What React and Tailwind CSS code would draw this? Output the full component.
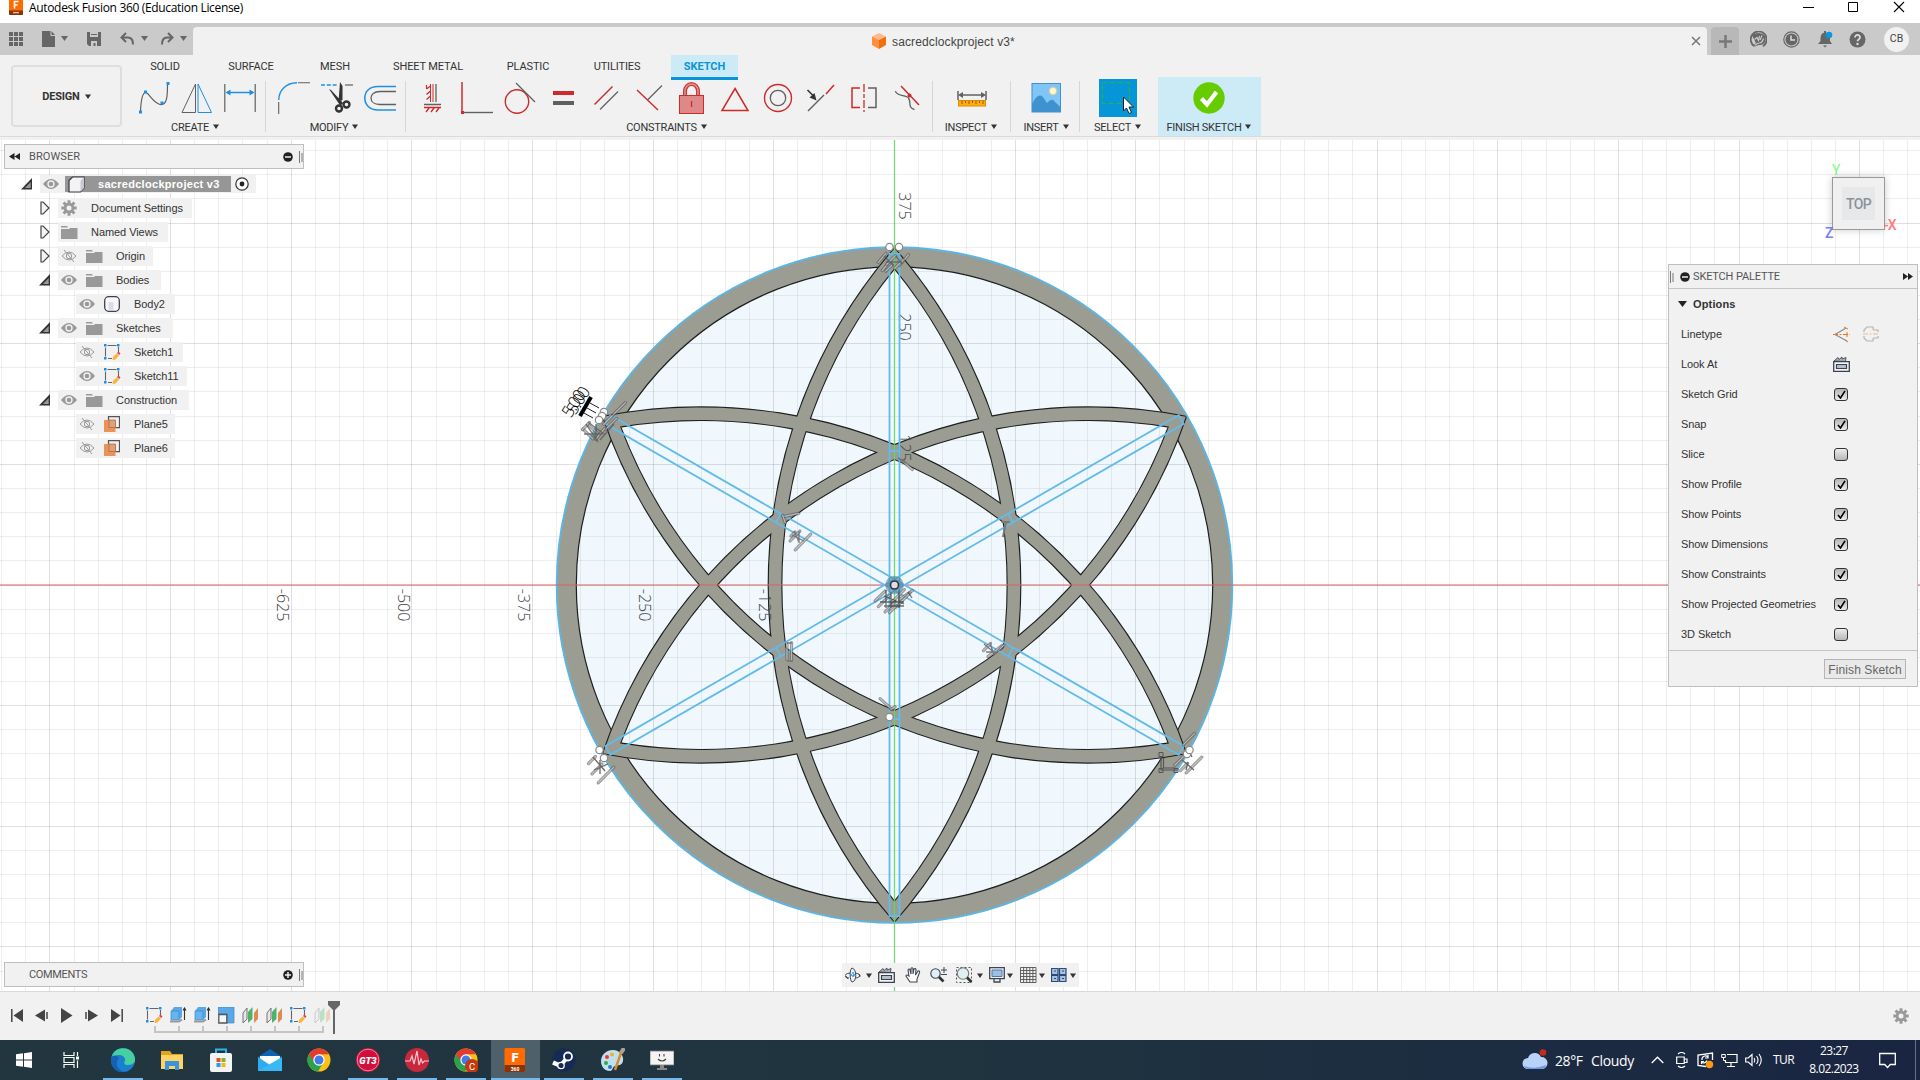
import React from "react";

const UI = "font-['Liberation_Sans',Arial,sans-serif]";
const RB = "font-['Roboto','Liberation_Sans',sans-serif]";
const WIN = "font-['Open_Sans','Noto_Sans',sans-serif]";

function Svg({ w = 32, h = 32, vb, className = "", children }) {
  return (
    <svg width={w} height={h} viewBox={vb || `0 0 ${w} ${h}`} fill="none" className={"shrink-0 " + className}>
      {children}
    </svg>
  );
}

function Caret({ className = "" }) {
  return (
    <Svg w={6} h={5} className={className}>
      <path d="M0 .5h6L3 5z" fill="#333" />
    </Svg>
  );
}

/* ---------- top bars ---------- */

function TitleBar() {
  return (
    <div className="flex h-[23px] items-start justify-between bg-white">
      <div className="flex items-start pl-[9px]">
        <Svg w={14} h={15} vb="0 1 14 15">
          <rect width="14" height="16" rx="1.5" fill="#ff6b00" />
          <path d="M0 11.5h14V15a1 1 0 0 1-1 1H1a1 1 0 0 1-1-1z" fill="#8a3208" />
          <path d="M5.5 9.5v-7h4M5.5 6h3.2" stroke="#fff" strokeWidth="1.6" />
          <path d="M4 13.6h6" stroke="#e8c4b0" strokeWidth="1.4" />
        </Svg>
        <span className={`${WIN} ml-[6px] mt-[-1px] whitespace-nowrap text-[12px] leading-[17px] tracking-[-0.33px] text-black`}>
          Autodesk Fusion 360 (Education License)
        </span>
      </div>
      <div className="flex pr-[15px]">
        <Svg w={11} h={14} className="mr-[34px]"><path d="M0 7.5h11" stroke="#000" /></Svg>
        <Svg w={11} h={14} className="mr-[34px]"><path d="M.5 2.5h9v9h-9z" stroke="#000" /></Svg>
        <Svg w={12} h={14}><path d="M1 2l10 10M11 2L1 12" stroke="#000" strokeWidth="1.1" /></Svg>
      </div>
    </div>
  );
}

function QuickBar() {
  return (
    <div className="flex h-[32px] items-end bg-[#cacaca]">
      <div className="flex h-[32px] w-[193px] shrink-0 items-center pl-[9px]">
        <Svg w={14} h={14}>
          {[0, 5, 10].map((y) => [0, 5, 10].map((x) => <rect key={x + "-" + y} x={x} y={y} width="4" height="4" fill="#666" />))}
        </Svg>
        <Svg w={14} h={16} className="ml-[19px]">
          <path d="M0 0h8.5v5H13v11H0z" fill="#666" /><path d="M9.5 0L13 4H9.5z" fill="#666" />
        </Svg>
        <Svg w={8} h={5} className="ml-[5px] mt-[-2px]"><path d="M0 0h7L3.500 5z" fill="#666" /></Svg>
        <Svg w={14} h={14} className="ml-[18px]">
          <path d="M0 0h14v14H2l-2-2z" fill="#666" /><path d="M3 0h8v5H3z" fill="#cacaca" /><path d="M4 2.500h6M4 8.500h6v6H4z" stroke="#666" /><path d="M4 9h6v5H8.500v-3h-2v3H4z" fill="#cacaca" />
        </Svg>
        <Svg w={15} h={14} className="ml-[19px]">
          <path d="M6 1L1.500 5.500L6 10M2 5.500h6q5 0 5 7" stroke="#666" strokeWidth="2" />
        </Svg>
        <Svg w={8} h={5} className="ml-[6px] mt-[-2px]"><path d="M0 0h7L3.500 5z" fill="#666" /></Svg>
        <Svg w={15} h={14} className="ml-[11px]">
          <path d="M8 1l4.500 4.500L8 10M12 5.500H7q-5 0-5 7" stroke="#666" strokeWidth="2" />
        </Svg>
        <Svg w={8} h={5} className="ml-[5px] mt-[-2px]"><path d="M0 0h7L3.500 5z" fill="#666" /></Svg>
      </div>
      <div className="flex h-[28px] w-[1514px] items-center rounded-t-[4px] bg-[#f1f1f1]">
        <div className="flex flex-1 items-center pl-[679px]">
          <Svg w={14} h={16}>
            <path d="M7 0l7 3.500L7 7L0 3.500z" fill="#ffb98a" /><path d="M0 3.500L7 7v9l-7-4z" fill="#ff8f3c" /><path d="M14 3.500L7 7v9l7-4z" fill="#f07010" />
          </Svg>
          <span className={`${UI} ml-[6px] mt-px whitespace-nowrap text-[12px] tracking-[0.13px] text-[#444]`}>sacredclockproject v3*</span>
        </div>
        <Svg w={10} h={10} className="mr-[6px]"><path d="M1 1l8 8M9 1L1 9" stroke="#777" strokeWidth="1.500" /></Svg>
      </div>
      <div className="ml-[4px] flex h-[28px] w-[28px] items-center justify-center rounded-t-[4px] bg-[#b8b8b8]">
        <Svg w={13} h={13}><path d="M6.500 0v13M0 6.500h13" stroke="#777" strokeWidth="2.500" /></Svg>
      </div>
      <div className="flex h-[32px] items-center">
        <Svg w={17} h={17} className="ml-[11px]">
          <path d="M4.500 15.300A8 8 0 1 1 13 15.200" stroke="#666" strokeWidth="1.800" />
          <path d="M2 4.500C5 1 12 1 15 5c2 5-1 9-5 9-2 0-3 .5-4.500 1.500L4 14c2-1 2-2 1-4z" fill="#666" />
          <path d="M4.500 8.500L7 6.500l1.500 3 1-4.500M12 4.500l-2 4.500M13.500 7.500q-1 4-4 4.500-3 0-4 2.500" stroke="#cacaca" strokeWidth="1.200" />
        </Svg>
        <Svg w={17} h={17} className="ml-[16px]">
          <circle cx="8.500" cy="8.500" r="7.700" stroke="#666" strokeWidth="1.200" /><circle cx="8.500" cy="8.500" r="6" fill="#666" /><path d="M8 4.500V9h4" stroke="#ddd" strokeWidth="1.500" />
        </Svg>
        <Svg w={15} h={17} className="ml-[18px]">
          <path d="M0 13h14l-2-3V7c0-3-2-5-4-5.300V0H6v1.700C4 2 2.500 4 2.500 7v3z" fill="#666" /><path d="M5 14.500h4L7 16.500z" fill="#666" /><circle cx="11" cy="4" r="3.300" fill="#0a96e0" />
        </Svg>
        <Svg w={17} h={17} className="ml-[16px]">
          <circle cx="8.500" cy="8.500" r="8" fill="#666" /><path d="M6 6.500c0-3.500 5.200-3.300 5 0-.1 1.800-2.500 2-2.500 3.800" stroke="#ddd" strokeWidth="1.800" /><circle cx="8.500" cy="13" r="1.200" fill="#ddd" />
        </Svg>
        <div className="ml-[18px] flex h-[25px] w-[25px] items-center justify-center rounded-full bg-[#f1f1f1]">
          <span className={`${RB} text-[10.500px] text-[#444]`}>CB</span>
        </div>
      </div>
    </div>
  );
}

const R = "#cf2a2a", G = "#606060", B = "#1c90e8";

const ICONS = {
  spline: (<>
    <path d="M2.500 29C3 18 4 12 7 10.500S14 20 22 22.500C29 24 29.500 14 29.500 3" stroke={G} strokeWidth="1.200" />
    {[[1, 28.500], [6, 8.500], [22.500, 19.500], [28.500, 0]].map(([x, y]) => <rect key={x} x={x} y={y} width="3" height="3" fill={B} />)}
  </>),
  mirror: (<><path d="M14.500 2v28.500H1z" stroke={G} /><path d="M17 2v28.500h13.500z" stroke={B} /></>),
  dimension: (<><path d="M.8 2v28M31.200 2v28" stroke={G} strokeWidth="1.200" /><path d="M3 10.500h26" stroke={B} strokeWidth="1.500" /><path d="M1.500 10.500l5-3v6zM30.500 10.500l-5-3v6z" fill={B} /></>),
  fillet: (<><path d="M.7 18C1 8 8 1 19 .8" stroke={B} strokeWidth="1.400" /><path d="M20 .8h12M.7 20v12" stroke={G} strokeWidth="1.100" /></>),
  trim: (<>
    <path d="M0 3h16" stroke={B} strokeWidth="1.400" strokeDasharray="4 1.800" /><path d="M24 3h8" stroke={G} strokeWidth="1.200" />
    <path d="M19 0l2.500 4v14L17.500 20zM8 7l2 1 12 13-2.500 3z" fill="#333" /><circle cx="18" cy="26.500" r="3" stroke="#333" strokeWidth="2.400" /><circle cx="25.500" cy="22.500" r="3" stroke="#333" strokeWidth="2.400" />
  </>),
  offset: (<><path d="M32 4.500H14C5 4.500.8 10 .8 16S5 28 14 28h18" stroke={B} strokeWidth="1.500" /><path d="M32 9.500H16c-6 0-9 3-9 6.500s3 6.500 9 6.500h16" stroke={G} strokeWidth="1.300" /></>),
  fix: (<>
    <path d="M15 2v18M12.500 2v18" stroke={R} /><path d="M18 2v18" stroke={G} strokeWidth="1.300" /><path d="M12.500 4l-4 3M12.500 9l-4 3.500M12.500 14l-4 3.500M8.500 3v4" stroke={R} strokeWidth="1.200" />
    <path d="M6 22.500h17" stroke={G} strokeWidth="1.500" /><path d="M6 25.500h17M11 26l-3 4M16 26l-3 4M21 26l-3 4" stroke={R} strokeWidth="1.300" />
  </>),
  perp: (<><path d="M1 0v29" stroke={R} strokeWidth="1.500" /><path d="M3 30.500h29" stroke={G} strokeWidth="1.400" /><rect x="0" y="29" width="3" height="3" fill={R} /></>),
  tangent: (<><circle cx="13" cy="19.500" r="11.700" stroke={R} strokeWidth="1.400" /><path d="M12 1l19 19" stroke={G} strokeWidth="1.300" /></>),
  equal: (<><path d="M6 11h21" stroke={R} strokeWidth="4" /><path d="M6 21h21" stroke={G} strokeWidth="4" /></>),
  parallel: (<><path d="M4.500 22.500l18-18" stroke={R} strokeWidth="1.400" /><path d="M10 27.500L28 9.500" stroke={G} strokeWidth="1.300" /></>),
  horiz: (<><path d="M4 8l21 20" stroke={R} strokeWidth="1.400" /><path d="M14.500 18L29 3.500" stroke={G} strokeWidth="1.300" /></>),
  lock: (<><path d="M9 14V9a6.500 7 0 0 1 13 0v5" stroke="#c93a3a" strokeWidth="4" /><path d="M9 14V9a6.500 7 0 0 1 13 0v5" stroke="#e89090" strokeWidth="1.500" /><rect x="3.500" y="13.500" width="24" height="18" fill="#de8888" stroke={R} /><path d="M15.500 19v6" stroke={R} strokeWidth="1.300" /></>),
  tri: <path d="M16 6.500L29 28.500H3z" stroke={R} strokeWidth="1.500" />,
  conc: (<><circle cx="16" cy="16" r="13.500" stroke={R} strokeWidth="1.400" /><circle cx="16" cy="16" r="7.700" stroke={G} strokeWidth="1.300" /></>),
  colinear: (<><path d="M3 29l16-16" stroke={G} strokeWidth="1.400" /><path d="M21 12l8-9" stroke={R} strokeWidth="1.500" /><path d="M2.500 8l6 6" stroke="#333" strokeWidth="1.600" /><path d="M11.500 18.500l-7-3 5-4.500z" fill="#333" /></>),
  symm: (<><path d="M12 6H4v19.500h8" stroke={R} strokeWidth="1.500" /><path d="M16 2v28" stroke={R} strokeWidth="1.300" strokeDasharray="8 2 4 2" /><path d="M20 6h8v19.500h-8" stroke={G} strokeWidth="1.500" /></>),
  curv: (<><path d="M10 4l18 19" stroke={R} strokeWidth="1.500" /><path d="M4.500 9c0 5 11 4 13 7 3 4-1 10 6 11.500" stroke={G} strokeWidth="1.300" /><circle cx="18.500" cy="13.500" r="2" fill={R} /></>),
};

function Tool({ name }) {
  return <div className="flex w-[43px] justify-center pl-[2px]"><Svg>{ICONS[name]}</Svg></div>;
}

function GroupLabel({ children, className = "" }) {
  return (
    <div className={`flex items-center justify-center gap-[4px] pt-[3px] ${className}`}>
      <span className={`${RB} whitespace-nowrap text-[11px] leading-[14px] tracking-[-0.25px] text-[#333]`}>{children}</span>
      <Caret className="mt-[-3px]" />
    </div>
  );
}

function Sep() {
  return <div className="mt-[1px] h-[51px] w-px bg-[#d6d6d6]" />;
}

function Tab({ w, children }) {
  return <div className={`${RB} ${w} whitespace-nowrap text-center text-[11px] tracking-[-0.12px] text-[#333]`}>{children}</div>;
}

function Group({ names, label, className, labelClass }) {
  return (
    <div className={className}>
      <div className="flex h-[38px] items-start pt-[2px]">{names.map((n) => <Tool key={n} name={n} />)}</div>
      <GroupLabel className={labelClass || ""}>{label}</GroupLabel>
    </div>
  );
}

function Ribbon() {
  return (
    <div className="h-[85px] bg-[#f1f1f1]">
      <div className="flex h-[82px] border-b border-[#dadada]">
        <div className="ml-[11px] mt-[10px] flex h-[62px] w-[111px] shrink-0 items-center justify-center gap-[5px] rounded-[4px] border-2 border-[#dedede]">
          <span className={`${RB} mt-[2px] text-[11px] font-bold tracking-[-0.2px] text-[#333]`}>DESIGN</span><Caret />
        </div>
        <div>
          <div className="flex h-[25px] items-center pl-[10px]">
            <Tab w="w-[66px]">SOLID</Tab><Tab w="w-[106px]">SURFACE</Tab><Tab w="w-[62px]">MESH</Tab><Tab w="w-[124px]">SHEET METAL</Tab><Tab w="w-[76px]">PLASTIC</Tab><Tab w="w-[102px]">UTILITIES</Tab>
            <div className={`${RB} ml-[3px] flex h-[25px] w-[67px] items-center justify-center border-b-[3px] border-[#0696d7] bg-[#cdeaf7] pt-[2px] text-[11px] font-bold text-[#0696d7]`}>SKETCH</div>
          </div>
          <div className="flex h-[56px]">
            <Group className="ml-[9px] w-[134px]" names={["spline", "mirror", "dimension"]} label="CREATE" labelClass="pr-[6px]" />
            <Sep />
            <Group className="ml-[5px] w-[134px]" names={["fillet", "trim", "offset"]} label="MODIFY" labelClass="pr-[8px]" />
            <Sep />
            <Group className="ml-[5px] w-[521px]" names={["fix", "perp", "tangent", "equal", "parallel", "horiz", "lock", "tri", "conc", "colinear", "symm", "curv"]} label="CONSTRAINTS" labelClass="pr-[10px]" />
            <Sep />
            <div className="w-[77px]">
              <div className="flex h-[38px] justify-center pt-[2px]">
                <Svg>
                  <path d="M2 9v9M30 9v9" stroke={G} strokeWidth="1.500" /><path d="M4 13h24" stroke={G} strokeWidth="1.500" /><path d="M2 13l5-3v6zM30 13l-5-3v6z" fill={G} />
                  <rect x="2.500" y="18.500" width="27" height="5.500" fill="#ffab10" stroke="#d98e00" /><path d="M6 19v3M9.500 19v2M13 19v3M16.500 19v2M20 19v3M23.500 19v2M27 19v3" stroke="#855500" strokeWidth=".9" />
                </Svg>
              </div>
              <GroupLabel className="pr-[1px]">INSPECT</GroupLabel>
            </div>
            <Sep />
            <div className="w-[68px]">
              <div className="flex h-[38px] justify-center pl-px pt-[2px]">
                <Svg>
                  <rect x="2" y="1.500" width="28.500" height="28.500" fill="#7fc6f7" stroke="#3f92cf" />
                  <circle cx="23" cy="9" r="3.700" fill="#fdf6cf" stroke="#e8c880" strokeWidth=".8" />
                  <path d="M2 22q6-12 11-7l4 6q5-6 8-1l5.500 5v5H2z" fill="#3f92cf" />
                </Svg>
              </div>
              <GroupLabel className="pl-[2px]">INSERT</GroupLabel>
            </div>
            <Sep />
            <div className="w-[78px]">
              <div className="flex h-[38px] justify-center pr-[2px]">
                <Svg w={38} h={38} className="mt-[-1px]">
                  <rect width="38" height="38" fill="#0696d7" /><path d="M3.500 3.500h27v21h-27z" stroke="#29b34a" strokeWidth="1.200" strokeDasharray="5 3" />
                  <path d="M24.500 18v14l3-3 2.500 5.500 2.500-1-2.500-5.500h4.500z" fill="#fff" stroke="#222" />
                </Svg>
              </div>
              <GroupLabel className="pr-[3px]">SELECT</GroupLabel>
            </div>
            <div className="mt-[-3px] w-[103px] bg-[#cdeaf7] pt-[3px]">
              <div className="flex h-[38px] justify-center pr-px pt-[2px]">
                <Svg><circle cx="16" cy="16" r="15.700" fill="#66cc00" /><path d="M8.500 16.500l5.500 6 9.500-12.500" stroke="#fff" strokeWidth="4.200" /></Svg>
              </div>
              <GroupLabel className="pr-px">FINISH SKETCH</GroupLabel>
            </div>
          </div>
        </div>
      </div>
    </div>
  );
}

/* ---------- model canvas ---------- */

const CX = 894.5, CY = 585, STEP = 24.13;
const cols = Array.from({ length: 81 }, (_, i) => i - 38);
const rows = Array.from({ length: 36 }, (_, i) => i - 18);
const LENS = "M0 -336.400A512.800 512.800 0 0 1 0 336.400A512.800 512.800 0 0 1 0 -336.400Z M0 -316.900A500.200 500.200 0 0 1 0 316.900A500.200 500.200 0 0 1 0 -316.900Z";

function Ruler({ x, y, children }) {
  return (
    <text transform={`translate(${x} ${y}) rotate(90)`} textAnchor="middle" fontFamily="Open Sans" fontWeight="300" fontSize="16" fill="#444">{children}</text>
  );
}

/* slanted bar used by the constraint markers */
function Bar({ x, y, a = -45, l = 16 }) {
  return (
    <g transform={`translate(${x} ${y}) rotate(${a})`}>
      <path d={`M${-l / 2} 0H${l / 2}`} stroke="#555" strokeOpacity=".6" strokeWidth="3.200" strokeLinecap="round" />
      <path d={`M${-l / 2} 0H${l / 2}`} stroke="#ccc" strokeOpacity=".8" strokeWidth="1.200" strokeLinecap="round" />
    </g>
  );
}

function Dot({ x, y }) {
  return <circle cx={x} cy={y} r="3.700" fill="#fff" stroke="#888" strokeWidth="1.200" />;
}

function Model() {
  return (
    <svg width="1920" height="851" viewBox="0 140 1920 851" fill="none" className="absolute inset-0">
      <circle cx={CX} cy={CY} r="337.500" fill="#f0f8fe" />
      <g shapeRendering="crispEdges">
        {cols.map((i) => <path key={i} d={`M${Math.round(CX + i * STEP - 0.5) + 0.5} 140V991`} stroke="#000" strokeOpacity={i % 5 === 0 ? 0.12 : 0.065} />)}
        {rows.map((i) => <path key={i} d={`M0 ${Math.round(CY + i * STEP - 0.5) + 0.5}H1920`} stroke="#000" strokeOpacity={i % 5 === 0 ? 0.12 : 0.065} />)}
      </g>
      <g transform={`translate(${CX} ${CY})`}>
        <circle r="328" stroke="#9b9c92" strokeWidth="19.500" />
        <circle r="318.200" stroke="#1c1f1e" strokeWidth="1.200" />
        <g stroke="#1c1f1e" strokeWidth="2.200">
          <path d={LENS} /><path d={LENS} transform="rotate(60)" /><path d={LENS} transform="rotate(120)" />
        </g>
        <g fill="#9b9c92" fillRule="evenodd">
          <path d={LENS} /><path d={LENS} transform="rotate(60)" /><path d={LENS} transform="rotate(120)" />
        </g>
        <circle r="337.800" stroke="#5cb6e4" strokeWidth="1.900" />
      </g>
      <path d="M0 585H1920" stroke="#e06060" strokeOpacity=".5" strokeWidth="1.800" />
      <path d="M894.500 140V991" stroke="#62dc62" strokeOpacity=".85" strokeWidth="1.300" />
      <Ruler x="276.500" y="605">-625</Ruler><Ruler x="397.500" y="605">-500</Ruler><Ruler x="518" y="605">-375</Ruler><Ruler x="638.500" y="605">-250</Ruler><Ruler x="759" y="605">-125</Ruler>
      <Ruler x="898.500" y="206">375</Ruler><Ruler x="898.500" y="327">250</Ruler><Ruler x="898.500" y="448">125</Ruler>
      <g transform={`translate(${CX} ${CY})`} stroke="#62bbe8" strokeWidth="1.800">
        {[0, 60, 120].map((a) => <path key={a} transform={`rotate(${a})`} d="M-5 -331H5V331H-5ZM-5 -134H5M-5 134H5" />)}
      </g>
      <Bar x="882" y="258" a="-50" l={12} /><Bar x="886" y="266" a="-50" l={12} /><Bar x="889" y="268" a="-45" l={9} /><Bar x="891" y="260" a="-45" l={12} /><Bar x="904" y="260" a="-50" l={14} /><Bar x="899" y="264" a="-45" l={12} /><path d="M884 256l10 10M896 256l6 8M886 262h16" stroke="#555" strokeOpacity=".7" strokeWidth="1.300" />
      <Bar x="619" y="409" a="-45" l={18} /><Bar x="611" y="424" /><Bar x="608" y="420" l={12} /><Bar x="588" y="434" a="45" l={14} /><Bar x="594" y="430" a="45" l={14} /><Bar x="600" y="434" a="-50" l={14} /><Bar x="586" y="426" a="-45" l={10} /><path d="M586 424l12 18M596 424v16M584 434h18M600 440l14-16M588 422l16 12" stroke="#555" strokeOpacity=".75" strokeWidth="1.400" />
      <Bar x="803" y="542" l={22} /><Bar x="795" y="536" l={14} /><Bar x="793" y="534" l={6} /><path d="M794 531l5 11M799 531v12M792 535l12 6" stroke="#777" strokeWidth="1.300" /><Bar x="791" y="515" a="-12" l={16} /><Bar x="784" y="519" a="70" l={8} />
      <Bar x="995" y="651" a="-38" l={18} /><Bar x="987" y="647" l={10} /><Bar x="1002" y="647" a="-45" l={6} /><path d="M984 644l12 10M990 643l4 12M986 652h12" stroke="#777" strokeWidth="1.300" />
      <Bar x="791.500" y="651.500" a="90" l={18} /><Bar x="787" y="651.500" a="90" l={16} /><path d="M787 643h5M787 661h5" stroke="#777" strokeWidth="1.500" />
      <Bar x="907" y="465" a="40" l={14} /><path d="M898 458l8 5" stroke="#777" strokeWidth="2" /><path d="M1001.500 522h8M1006 522l-3 15" stroke="#777" strokeWidth="2" />
      <Bar x="886" y="704" a="42" l={16} /><Bar x="893" y="708" a="-30" l={5} />
      <Bar x="592" y="760" l={10} /><Bar x="597" y="769" l={14} /><Bar x="606" y="775" l={22} /><path d="M593 757l12 14M600 760v14M594 770l14-6" stroke="#666" strokeWidth="1.300" />
      <Bar x="1194" y="765" l={22} /><Bar x="1189" y="739" l={16} /><Bar x="1179" y="761" l={12} /><Bar x="1184" y="767" l={10} /><path d="M1182 760l12 10M1188 762l-2 8M1192 757l-4-8" stroke="#666" strokeWidth="1.300" />
      <path d="M1161 756v14h16M1163.500 758v10h12" stroke="#555" strokeWidth="1.200" /><path d="M1159 752.500h4v4h-4zM1159 768.500h4v4h-4zM1174 768.500h4v4h-4z" stroke="#555" />
      <Bar x="880" y="596" l={14} /><Bar x="884" y="601" l={16} /><Bar x="890" y="607" l={14} /><Bar x="906" y="595" a="-35" l={16} /><Bar x="903" y="600" a="-45" l={20} /><Bar x="893" y="609" l={10} /><Bar x="898" y="596" l={18} /><path d="M886 590v18M891 592v16M899 590v18M880 602h24M884 596l20 8M884 606h20M908 592l4 6" stroke="#333" strokeWidth="1.300" strokeOpacity=".7" />
      <circle cx="894.500" cy="585" r="7" stroke="#4b7c96" strokeOpacity=".55" strokeWidth="4.500" /><circle cx="894.500" cy="585" r="4" fill="#e6dce8" stroke="#333" strokeWidth="1.600" />
      <g transform="translate(575.500 401.500) rotate(-57)">
        <text x="-17" y="5.500" fontFamily="Open Sans" fontSize="17" fontWeight="300" textLength="29" fill="#000">5.00</text>
        <text x="-12" y="7.500" fontFamily="Open Sans" fontSize="17" fontWeight="300" textLength="29" fill="#000">5.00</text>
      </g>
      <path d="M580 416l11-19" stroke="#000" strokeWidth="4" /><path d="M584 413l9 5M587 408l9 5M590 403l9 5" stroke="#222" />
      <Dot x="889.500" y="247" /><Dot x="899" y="247" /><Dot x="604" y="412" /><Dot x="602" y="416" /><Dot x="599" y="420" /><Dot x="599.500" y="750" /><Dot x="604" y="758" /><Dot x="889.500" y="717" /><Dot x="1187" y="754" /><Dot x="1189.500" y="750" />
    </svg>
  );
}

function ViewCube() {
  return (
    <div className={`${RB} absolute left-[1832px] top-[37px] h-[53px] w-[53px]`}>
      <div className="flex h-full w-full items-center justify-center border border-[#999] bg-[#f0f0f0] shadow-[0_0_8px_rgba(0,0,0,0.2)]">
        <div className="flex h-[33px] w-[33px] items-center justify-center bg-[#e6e8ea] pt-px">
          <span className="text-[14px] font-medium leading-[16px] tracking-[-0.7px] text-[#8d9298]">TOP</span>
        </div>
      </div>
      <span className="absolute left-0 top-[-15px] text-[14px] leading-[17px] text-[#7dfa7d]">Y</span>
      <span className="absolute left-[52px] top-[40px] whitespace-nowrap text-[14px] font-medium leading-[17px] tracking-[-1px] text-[#ff7a7a]">-X</span>
      <span className="absolute left-[-7px] top-[48px] text-[14px] font-medium leading-[17px] text-[#7a7aff]">Z</span>
    </div>
  );
}

/* ---------- browser ---------- */

function Eye({ off }) {
  return off ? (
    <Svg w={16} h={14}><path d="M1 7q7-8 14 0q-7 8-14 0z" stroke="#999" /><circle cx="8" cy="7" r="2.700" stroke="#999" /><path d="M3 1l10 12" stroke="#999" /></Svg>
  ) : (
    <Svg w={16} h={14}><path d="M0 7q8-10 16 0q-8 10-16 0z" fill="#999" /><circle cx="8" cy="7" r="3" fill="#999" stroke="#f1f1f1" strokeWidth="1.400" /></Svg>
  );
}

function Gear({ s = 16 }) {
  return (
    <Svg w={s} h={s} vb="0 0 16 16">
      <g stroke="#999" strokeWidth="3">{[0, 45, 90, 135].map((a) => <path key={a} d="M8 .3v15.400" transform={`rotate(${a} 8 8)`} />)}</g>
      <circle cx="8" cy="8" r="5.300" fill="#999" /><circle cx="8" cy="8" r="2.500" fill="#f1f1f1" />
    </Svg>
  );
}

function SketchIcon() {
  return (
    <Svg w={17} h={17}>
      <path d="M3.500 1.500h9M1.500 3.500v9M14.500 3v6M4 14.500h4" stroke="#666" strokeWidth="1.100" />
      {[[0, 0], [13, 0], [0, 13]].map(([x, y]) => <rect key={x + "" + y} x={x} y={y} width="2.500" height="2.500" fill={B} />)}
      <path d="M9 13l3.500-3.500 2.500 2L11.500 15.500 8.500 16z" fill="#f6b73c" /><path d="M13 9l1.500-1.500 2 2L15.200 11z" fill="#ee3e4e" />
    </Svg>
  );
}

const NODE_ICONS = {
  comp: <Svg w={17} h={17}><path d="M1 4.500L4.500 1H16v11l-3.500 4H1z" fill="#f3f3f5" stroke="#3a3a44" strokeWidth="1.200" /><path d="M12.500 5L16 1v11l-3.500 4z" fill="#c6c8d2" /></Svg>,
  gear: <Gear />,
  folder: <Svg w={17} h={13}><path d="M0 0h6l1 1.500H0zM0 3h8l1-1h7.500v11H0z" fill="#999" /></Svg>,
  body: <Svg w={16} h={16}><rect x=".7" y=".7" width="14.600" height="14.600" rx="4" fill="#fafafc" stroke="#3a4050" strokeWidth="1.300" /><path d="M4.500 6v8h5V6z" fill="#dadde6" /></Svg>,
  sketch: <SketchIcon />,
  plane: <Svg w={16} h={16}><path d="M4.500 .7h11v11h-11z" stroke="#555" strokeWidth="1.200" /><path d="M0 4h11.500v12H0z" fill="#e8935a" /><path d="M5 4h6.500v7.500H5z" fill="#dba27e" stroke="#b9683a" strokeWidth=".8" /></Svg>,
};

function Twist({ open }) {
  return open ? (
    <Svg w={12} h={12} className="ml-[-0.500px]"><path d="M11 0v11.500H0z" fill="#333" /><path d="M9.700 4v6H4z" fill="#999" /></Svg>
  ) : (
    <Svg w={11} h={14}><path d="M2 1h2l6 6-6 6H2z" fill="#f4f4f4" stroke="#444" strokeWidth="1.200" /></Svg>
  );
}

const TREE = [
  { pad: "pl-[58px]", w: "w-[134px]", icon: "gear", label: "Document Settings", tw: "c" },
  { pad: "pl-[58px]", w: "w-[110px]", icon: "folder", label: "Named Views", tw: "c" },
  { pad: "pl-[58px]", w: "w-[95px]", eye: "off", icon: "folder", label: "Origin", tw: "c" },
  { pad: "pl-[58px]", w: "w-[103px]", eye: "on", icon: "folder", label: "Bodies", tw: "o" },
  { pad: "pl-[76px]", w: "w-[99px]", eye: "on", icon: "body", label: "Body2" },
  { pad: "pl-[58px]", w: "w-[115px]", eye: "on", icon: "folder", label: "Sketches", tw: "o" },
  { pad: "pl-[76px]", w: "w-[107px]", eye: "off", icon: "sketch", label: "Sketch1" },
  { pad: "pl-[76px]", w: "w-[111px]", eye: "on", icon: "sketch", label: "Sketch11" },
  { pad: "pl-[58px]", w: "w-[131px]", eye: "on", icon: "folder", label: "Construction", tw: "o" },
  { pad: "pl-[76px]", w: "w-[99px]", eye: "off", icon: "plane", label: "Plane5" },
  { pad: "pl-[76px]", w: "w-[99px]", eye: "off", icon: "plane", label: "Plane6" },
];

function Knob({ plus }) {
  return <Svg w={10} h={10}><circle cx="5" cy="5" r="4.800" fill="#222" /><path d={plus ? "M2 5h6M5 2v6" : "M2 5h6"} stroke="#f1f1f1" strokeWidth="1.500" /></Svg>;
}
function Grip() {
  return <Svg w={4} h={12}><path d="M.5 0v12" stroke="#777" /><path d="M3 2v9" stroke="#777" /></Svg>;
}

function Browser() {
  return (
    <div className={`${UI} absolute left-[4px] top-[4px] w-[300px] text-[11px] text-[#333]`}>
      <div className="flex h-[25px] items-center border border-[#bfbfbf] bg-[#f1f1f1]">
        <Svg w={11} h={7} className="ml-[4px]"><path d="M5.500 0v7L0 3.500zM11 0v7L5.500 3.500z" fill="#222" /></Svg>
        <span className={`${RB} ml-[9px] flex-1 pt-[2px] text-[11px] tracking-[0.080px] text-[#555]`}>BROWSER</span>
        <Knob /><span className="w-[6px]" /><Grip />
      </div>
      <div className="flex h-[27px] items-center pt-[3px]">
        <div className="ml-[17px] w-[19px]"><Twist open /></div>
        <div className="flex h-[18px] w-[216px] items-center bg-[#f1f1f1] pl-[3px]">
          <Eye />
          <div className="ml-[6px] flex h-[16px] w-[166px] items-center bg-[#969696] pl-[3px]">
            {NODE_ICONS.comp}
            <span className="ml-[13px] whitespace-nowrap text-[11px] font-bold tracking-[0.290px] text-white">sacredclockproject v3</span>
          </div>
          <Svg w={14} h={14} className="ml-[4px]"><circle cx="7" cy="7" r="6.200" fill="#fff" stroke="#333" strokeWidth="1.200" /><circle cx="7" cy="7" r="2.400" fill="#222" /></Svg>
        </div>
      </div>
      <div className="ml-[-4px]">
        {TREE.map((n) => (
          <div key={n.label} className={`flex h-[24px] items-center ${n.pad}`}>
            <div className="ml-[-20px] flex w-[20px] items-center pl-[1px]">{n.tw && <Twist open={n.tw === "o"} />}</div>
            <div className={`flex h-[20px] items-center bg-[#f1f1f1] pl-[3px] ${n.w}`}>
              {n.eye && <div className="w-[25px] shrink-0"><Eye off={n.eye === "off"} /></div>}
              <div className="flex w-[30px] shrink-0 items-center">{NODE_ICONS[n.icon]}</div>
              <span className="whitespace-nowrap tracking-[-0.060px]">{n.label}</span>
            </div>
          </div>
        ))}
      </div>
    </div>
  );
}

/* ---------- palette ---------- */

function Check({ on }) {
  return (
    <div className={`flex h-[13px] w-[14px] items-center justify-center rounded-[3px] border border-[#333] bg-gradient-to-b ${on ? "from-[#b4b4b4] to-[#ececec]" : "from-[#ececec] to-[#b8b8b8]"}`}>
      {on ? <Svg w={9} h={9}><path d="M1 5l2.500 3L8 .8" stroke="#000" strokeWidth="1.600" /></Svg> : null}
    </div>
  );
}

const OPTIONS = [["Sketch Grid", true], ["Snap", true], ["Slice", false], ["Show Profile", true], ["Show Points", true], ["Show Dimensions", true], ["Show Constraints", true], ["Show Projected Geometries", true], ["3D Sketch", false]];

function LookAt() {
  return (
    <Svg w={17} h={16}>
      <path d="M1 5l4-3.500 1 2 3-2.500 0 2 4-1.500-.5 4z" fill="#aab0b8" stroke="#444c58" strokeWidth=".9" />
      <path d="M.7 5.700h15.600v9.600H.7z" fill="#f6f6f6" stroke="#3a4250" strokeWidth="1.300" /><path d="M3.500 8.500h10v4h-10z" fill="#b7c0ca" stroke="#3a4250" strokeWidth="1.200" />
    </Svg>
  );
}

function Row({ label, children }) {
  return (
    <div className="flex h-[30px] items-center pl-[12px]">
      <span className="w-[152px] shrink-0 whitespace-nowrap tracking-[-0.080px]">{label}</span>{children}
    </div>
  );
}

function Palette() {
  return (
    <div className={`${UI} absolute left-[1668px] top-[124px] h-[423px] w-[250px] border border-[#bfbfbf] bg-[#f1f1f1] text-[11px] text-[#333]`}>
      <div className="flex h-[24px] items-center border-b border-[#c4c4c4] pl-[1px] pr-[4px]">
        <Grip /><span className="w-[6px]" /><Knob />
        <span className={`${RB} ml-[3px] flex-1 pt-[2px] text-[11px] tracking-[-0.150px] text-[#555]`}>SKETCH PALETTE</span>
        <Svg w={10} h={7}><path d="M0 0v7l5-3.500zM5 0v7l5-3.500z" fill="#222" /></Svg>
      </div>
      <div className="flex h-[30px] items-center pl-[9px]">
        <Svg w={9} h={6}><path d="M0 0h9L4.500 6z" fill="#222" /></Svg>
        <span className="ml-[6px] font-bold tracking-[0.150px]">Options</span>
      </div>
      <Row label="Linetype">
        <Svg w={17} h={17}><path d="M13 2L2 8.500L14 15" stroke="#888" strokeWidth="1.100" /><path d="M0 8.500h17" stroke="#e87722" strokeWidth="1.200" strokeDasharray="5 1.500 2 1.500" /><path d="M11 1l4 2M12 14l3 2M14 6v5" stroke="#e87722" /></Svg>
        <Svg w={16} h={16} className="ml-[13px]"><path d="M1 6V4l3-3h6v2l1 1h4v2M1 10v2l3 3h6v-2l1-1h4v-2" stroke="#b5b5b5" strokeWidth="1.200" /><path d="M0 8h16" stroke="#f2b995" strokeWidth="1.200" strokeDasharray="5 1.500 2 1.500" /></Svg>
      </Row>
      <Row label="Look At"><LookAt /></Row>
      {OPTIONS.map(([l, on]) => <Row key={l} label={l}><span className="w-px" /><Check on={on} /></Row>)}
      <div className="mt-[1px] flex h-[36px] items-center justify-end border-t border-[#c4c4c4] pr-[11px]">
        <div className="flex h-[20px] w-[82px] items-center justify-center border border-[#b5b5b5] bg-[#e9e9e9] pt-[2px] text-[12px] text-[#666]">
          <span className="whitespace-nowrap tracking-[0.100px]">Finish Sketch</span>
        </div>
      </div>
    </div>
  );
}

/* ---------- bottom of canvas ---------- */

function NavBar() {
  const c = "#3f4652";
  return (
    <div className="absolute left-[842px] top-[823px] flex h-[24px] w-[237px] items-center bg-[#f1f1f1] pl-[3px]">
      <Svg w={16} h={16}><path d="M7 1C4 3 5 14 7 15c5 0 5-13 0-14z" stroke={c} /><path d="M5 6C-2 7-1 11 4 11M10 6c7 1 6 4 1 5M1 9l2 3M14 7l1 3" stroke={c} /><path d="M5 8h6M8 5v6" stroke={B} strokeDasharray="2 1" strokeWidth="1.300" /></Svg>
      <Caret className="ml-[5px] mr-[6px]" />
      <LookAt />
      <Svg w={16} h={16} className="ml-[10px]"><path d="M5 15L1 9q0-2 3 0L3 3q1-2 2 0l1 4V1.500q1-1.500 2 0V7l1-5q1.500-1 2 .5L10.500 8 13 4q2-.5 1.500 1.500L12 12v3z" fill="#fff" stroke={c} strokeWidth="1.100" /></Svg>
      <Svg w={17} h={16} className="ml-[9px]"><circle cx="5.500" cy="6.500" r="4.700" fill="#dff0f4" stroke={c} strokeWidth="1.100" /><path d="M9 10l4.500 4.500" stroke="#333" strokeWidth="2.600" /><path d="M11 3h6M14 0v6M11 7.500h6" stroke={c} /></Svg>
      <Svg w={17} h={16} className="ml-[9px]"><path d="M.5.500h15v15H.5z" stroke="#555" strokeDasharray="2 2" /><circle cx="7" cy="6.500" r="5.700" fill="#dfeff4" stroke="#777" strokeWidth="1.100" /><path d="M11 10.500l4.500 4.500" stroke="#333" strokeWidth="2.600" /></Svg>
      <Caret className="ml-[4px] mr-[6px]" />
      <Svg w={16} h={16}><path d="M.7.700h14.600v11H.7z" fill="#eee" stroke={c} strokeWidth="1.300" /><path d="M3 3h10v6.500H3z" fill="#9dbfe4" stroke="#5078a8" /><path d="M5 12v3h6v-3" stroke={c} strokeWidth="1.300" /></Svg>
      <Caret className="ml-[2px] mr-[7px]" />
      <Svg w={17} h={16}><path d="M.5.500h15.500v15H.5zM3.600 0v16M6.700 0v16M9.800 0v16M12.900 0v16M0 3.500h16M0 6.500h16M0 9.500h16M0 12.500h16" stroke="#555" strokeWidth=".9" /></Svg>
      <Caret className="ml-[2px] mr-[6px]" />
      <Svg w={16} h={14}><path d="M.5.500h6.500v6H.5zM8.500.500H15v6H8.500zM.5 7.500h6.500v6H.5zM8.500 7.500H15v6H8.500z" fill="#a9c2e2" stroke="#2c4a78" strokeWidth="1.200" /><path d="M3 3h2M11 3h2M3 10.500h2M11 10.500h2" stroke="#2c4a78" /></Svg>
      <Caret className="ml-[3px]" />
    </div>
  );
}

function Comments() {
  return (
    <div className="absolute left-[4px] top-[822px] flex h-[25px] w-[300px] items-center border border-[#bfbfbf] bg-[#f1f1f1]">
      <span className={`${RB} ml-[24px] flex-1 pt-[2px] text-[11px] tracking-[-0.350px] text-[#555]`}>COMMENTS</span>
      <Knob plus /><span className="w-[6px]" /><Grip />
    </div>
  );
}

/* ---------- timeline ---------- */

const extrude = <Svg w={17} h={17}><path d="M1 4l3-4h8v10l-3 3H1z" fill="#5aa9e6" /><path d="M1 4h8v9H1z" fill="#69b4ec" stroke="#3a88c8" strokeWidth=".7" /><path d="M0 14.500h9l3-2" stroke="#999" strokeWidth="2" /><path d="M14.500 2v11M13 3.500L14.500 1 16 3.500" stroke="#333" strokeWidth="1.100" /></Svg>;
const scale = <Svg w={17} h={17}><path d="M0 0h16v16H9V7H0z" fill="#5aa9e6" stroke="#3a88c8" strokeWidth=".7" /><path d="M.8 7.500h8v8.500h-8z" fill="#f6f6f6" stroke="#555" strokeWidth="1.300" /></Svg>;
const midplane = <Svg w={17} h={17}><path d="M1 16V6l4-5v11z" fill="#e8e8e8" stroke="#666" strokeWidth=".9" /><path d="M6 16V5l4.500-5v12z" fill="#4db36c" /><path d="M12 16V6l4-5v11z" fill="#e08a52" /></Svg>;

function Timeline() {
  const d = "#444";
  const steps = [<SketchIcon />, extrude, extrude, scale, midplane, midplane, <SketchIcon />, midplane];
  return (
    <div className="flex h-[49px] items-start border-t border-[#dadada] bg-[#f1f1f1] pt-[15px]">
      <div className="flex w-[142px] shrink-0 items-center pl-[11px] pt-[1px]">
        <Svg w={12} h={15}><path d="M.8 1v13" stroke={d} strokeWidth="1.500" /><path d="M12 1v13L2.500 7.500z" fill={d} /></Svg>
        <Svg w={13} h={15} className="ml-[12px]"><path d="M10 1.500v12L0 7.500z" fill={d} /><path d="M12 4v7" stroke={d} strokeWidth="1.500" /></Svg>
        <Svg w={12} h={15} className="ml-[13px]"><path d="M0 0v15l11.500-7.500z" fill={d} /></Svg>
        <Svg w={13} h={15} className="ml-[12px]"><path d="M3 1.500v12l10-6z" fill={d} /><path d="M1 4v7" stroke={d} strokeWidth="1.500" /></Svg>
        <Svg w={12} h={15} className="ml-[13px]"><path d="M11.200 1v13" stroke={d} strokeWidth="1.500" /><path d="M0 1v13l9.500-6.500z" fill={d} /></Svg>
      </div>
      <div className="flex">
        {steps.map((s, i) => (
          <div key={i} className="flex w-[24px] flex-col items-center">
            <div className={i === 7 ? "pl-px opacity-30" : "pl-px"}>{s}</div>
            <Svg w={25} h={8} className="mt-[2px]"><path d={i === 0 ? "M13 0v6h12" : i === 7 ? "M0 6h13V0" : "M0 6h25M13 6V0"} stroke="#c4c4c4" strokeWidth="2" /></Svg>
          </div>
        ))}
      </div>
      <Svg w={12} h={34} className="ml-[-6px] mt-[-6px]"><path d="M0 0h12v4L7 9H5L0 4z" fill="#666" /><path d="M6 8v25" stroke="#666" strokeWidth="2" /></Svg>
      <div className="ml-auto mr-[11px] mt-[1px]"><Gear /></div>
    </div>
  );
}

/* ---------- taskbar ---------- */

function Chrome() {
  return (
    <g>
      <circle cx="12" cy="12" r="11.500" fill="#fbc116" /><path d="M12 12L2 6.200A11.500 11.500 0 0 0 11 23.500L16.500 14z" fill="#2ba24c" />
      <path d="M12 6.300h10A11.500 11.500 0 0 0 2 6.200L7 14z" fill="#e33b2e" /><circle cx="12" cy="12" r="5.700" fill="#fff" /><circle cx="12" cy="12" r="4.500" fill="#3f7de8" />
    </g>
  );
}

const TASKS = [
  { on: 1, i: <><circle cx="12" cy="12" r="12" fill="#1b7fd0" /><path d="M1 8C4-2 21-3 24 10c1 5-3 7-7 7-3 0-5-2-3-4 1-3-2-6-6-6-3 0-6 1-7 1z" fill="#46cfa0" /><path d="M8 10c-5 5-1 13 6 14C5 26-1 18 0 11c1-4 6-4 8-1z" fill="#1560b0" /></> },
  { i: <><path d="M1 3h9l2 3h11v15H1z" fill="#e5a21a" /><path d="M1 7h22v14H1z" fill="#fdd267" /><path d="M5 13h14v9h-4v-4H9v4H5z" fill="#3a94dc" /></> },
  { i: <><path d="M7 6V1.500h10V6" stroke="#2eb4e8" strokeWidth="2" /><rect x="1" y="5" width="22" height="19" rx="2" fill="#f3f3f3" /><path d="M7.500 10h4v4h-4z" fill="#ee4b2b" /><path d="M12.500 10h4v4h-4z" fill="#7db828" /><path d="M7.500 15h4v4h-4z" fill="#21a0ea" /><path d="M12.500 15h4v4h-4z" fill="#fcb614" /></> },
  { i: <><path d="M0 9l12-8 12 8v14H0z" fill="#0d63b5" /><path d="M2 8h20v6l-10 6L2 14z" fill="#fff" /><path d="M0 9l12 8v6H0z" fill="#30aaf0" /><path d="M24 9L0 23h24z" fill="#38b8f6" /></> },
  { i: <Chrome /> },
  { on: 1, i: <><circle cx="12" cy="12" r="12" fill="#d0103c" /><circle cx="12" cy="12" r="10.800" stroke="#f0a0b0" strokeWidth=".8" /><text x="12" y="15.500" textAnchor="middle" fontFamily="Roboto" fontStyle="italic" fontWeight="900" fontSize="9.500" fill="#fff">GT3</text></> },
  { on: 1, i: <><circle cx="12" cy="12" r="12" fill="#c8283e" /><path d="M0 13h5l2-5 2 8 3-13 2 14 2-6 1.500 4 2-2H24" stroke="#f5c5cc" strokeWidth="1.200" /></> },
  { on: 1, i: <><Chrome /><circle cx="18" cy="18" r="7" fill="#c5380c" /><text x="18" y="21.500" textAnchor="middle" fontFamily="Roboto" fontSize="9.500" fill="#fff">C</text></> },
  { on: 1, act: 1, i: <><rect x="1.500" width="20.500" height="24" rx="1.500" fill="#ff6b00" /><path d="M1.500 17H22v5.500a1.500 1.500 0 0 1-1.500 1.500H3a1.500 1.500 0 0 1-1.500-1.500z" fill="#8a3208" /><text x="12" y="14" textAnchor="middle" fontFamily="Roboto" fontWeight="900" fontSize="13" fill="#fff">F</text><text x="12" y="22.500" textAnchor="middle" fontFamily="Roboto" fontWeight="700" fontSize="5" fill="#fff">360</text></> },
  { on: 1, i: <><circle cx="12" cy="12" r="11.500" fill="#152a55" /><path d="M1 14.500l8 3.500" stroke="#fff" strokeWidth="4.500" /><path d="M9 17l5-6" stroke="#fff" strokeWidth="4" /><circle cx="9" cy="17.500" r="3.200" fill="#152a55" stroke="#fff" strokeWidth="1.300" /><circle cx="16" cy="8.500" r="4" fill="#152a55" stroke="#fff" strokeWidth="1.800" /></> },
  { on: 1, i: <><path d="M12 2C4 2 0 8 0 13c0 7 5 10 9 10 3 0 2-4 5-5s7 0 8-5S19 2 12 2z" fill="#bfe0f0" /><circle cx="6" cy="9" r="2" fill="#e33" /><circle cx="11" cy="6.500" r="2" fill="#efb320" /><circle cx="5" cy="15" r="2" fill="#3a3" /><circle cx="9" cy="19" r="2" fill="#27c" /><path d="M21 2L14 22" stroke="#dd8a2c" strokeWidth="2.500" /><path d="M20 5l3-5" stroke="#b0a090" strokeWidth="4" /></> },
  { on: 1, i: <><path d="M0 3h24v14H0z" fill="#f4f4f4" stroke="#777" strokeWidth=".8" /><path d="M9.500 6v2.500M14 6v2.500M8 11q4 4 8 0" stroke="#444" strokeWidth="1.100" /><path d="M10 17h4v3h3v2H7v-2h3z" fill="#888" /></> },
];

function Taskbar() {
  const w = "#fff";
  return (
    <div className={`${WIN} flex h-[40px] bg-gradient-to-r from-[#21363f] via-[#1f343f] via-50% to-[#1a2542] text-white`}>
      <div className="flex w-[48px] items-center justify-center"><Svg w={16} h={16}><path d="M0 2.300l7-1v6.200H0zM8 1.200L16 0v7.500H8zM0 8.500h7v6.300l-7-1zM8 8.500h8V16l-8-1.200z" fill={w} /></Svg></div>
      <div className="mr-[4px] flex w-[47px] items-center justify-center"><Svg w={17} h={16}><path d="M1 0v3.500h10V0M1 16v-3.500h10V16M1 5.500h10v5H1zM14.500 0v4M14.500 8.500V16" stroke={w} strokeWidth="1.200" /><path d="M13 4.500h3v3h-3z" fill={w} /></Svg></div>
      {TASKS.map((t, k) => (
        <div key={k} className={`flex w-[49px] shrink-0 flex-col items-center ${t.act ? "bg-[#4e6069]" : ""}`}>
          <div className="flex h-[38px] items-center pr-[2px] pt-[2px]"><Svg w={24} h={24}>{t.i}</Svg></div>
          {t.on && <div className={`h-[2px] bg-[#76b9ed] ${t.act ? "w-[49px]" : "mr-px w-[40px]"}`} />}
        </div>
      ))}
      <div className="ml-auto flex items-center">
        <Svg w={26} h={22}><path d="M6 20a5.500 5.500 0 0 1 0-11 7 7 0 0 1 13-1 6 6 0 0 1 1 12z" fill="#b9d2f8" /><path d="M2 17q10 4 22-1a5 5 0 0 1-4 4H6a5 5 0 0 1-4-3z" fill="#6f9ae8" /><circle cx="21" cy="3.500" r="3.300" fill="#c42b1c" /></Svg>
        <span className="ml-[7px] w-[36px] whitespace-nowrap text-[14px] tracking-[-0.4px]">28°F</span>
        <span className="w-[60px] whitespace-nowrap text-[14px] tracking-[-0.35px]">Cloudy</span>
        <Svg w={13} h={8}><path d="M.7 7L6.500 1.200 12.300 7" stroke={w} strokeWidth="1.300" /></Svg>
        <Svg w={12} h={16} className="ml-[12px]"><path d="M.7 5h7.500v6.500H.7zM8.500 7h2.500v3.500H8.500M2 2q3.500-3 7 0M2 14q3.500 3 7 0" stroke={w} strokeWidth="1.200" /></Svg>
        <Svg w={17} h={17} className="ml-[9px]"><path d="M15.500 8V1L1 3v10.500l8 1" stroke={w} strokeWidth="1.300" /><path d="M11 5a3.500 3.500 0 0 0-6 3M5 10.500a3.500 3.500 0 0 0 5-2M11 3v3H8M4.500 12V9.500H7" stroke={w} strokeWidth="1.200" /><circle cx="12.500" cy="12.500" r="3.700" fill="#ff9a10" /></Svg>
        <Svg w={17} h={16} className="ml-[7px]"><path d="M6 2.500h10v8H4.500V8M10 10.500v4M6 14.500h8" stroke={w} strokeWidth="1.200" /><path d="M.7 2.500h3.600v3H.7zM2.500 6v2.500h2" stroke={w} /></Svg>
        <Svg w={18} h={16} className="ml-[7px]"><path d="M.7 6h2.500L7 2.500v11L3.200 10H.7z" stroke={w} strokeWidth="1.200" /><path d="M9 6q1.500 2 0 4.500M11.500 4q3 4 0 8M14 2q4.500 6 0 12" stroke={w} strokeWidth="1.100" /></Svg>
        <span className="ml-[10px] w-[22px] text-[12px] tracking-[-0.6px]">TUR</span>
        <div className="ml-[8px] flex w-[62px] flex-col items-center whitespace-nowrap text-[12px] leading-[18px] tracking-[-0.550px]"><span>23:27</span><span>8.02.2023</span></div>
        <Svg w={17} h={17} className="ml-[14px]"><path d="M.7 1.500h15.600v11h-5L8.500 15.500 5.700 12.500h-5z" stroke={w} strokeWidth="1.300" /></Svg>
        <div className="ml-[19px] mr-[4px] h-[40px] w-px bg-[#66708a]" />
      </div>
    </div>
  );
}

export default function App() {
  return (
    <div className="flex h-[1080px] w-[1920px] flex-col overflow-hidden bg-white">
      <TitleBar />
      <QuickBar />
      <Ribbon />
      <div className="relative h-[851px] overflow-hidden bg-white">
        <Model />
        <ViewCube />
        <Browser />
        <Palette />
        <Comments />
        <NavBar />
      </div>
      <Timeline />
      <Taskbar />
    </div>
  );
}
